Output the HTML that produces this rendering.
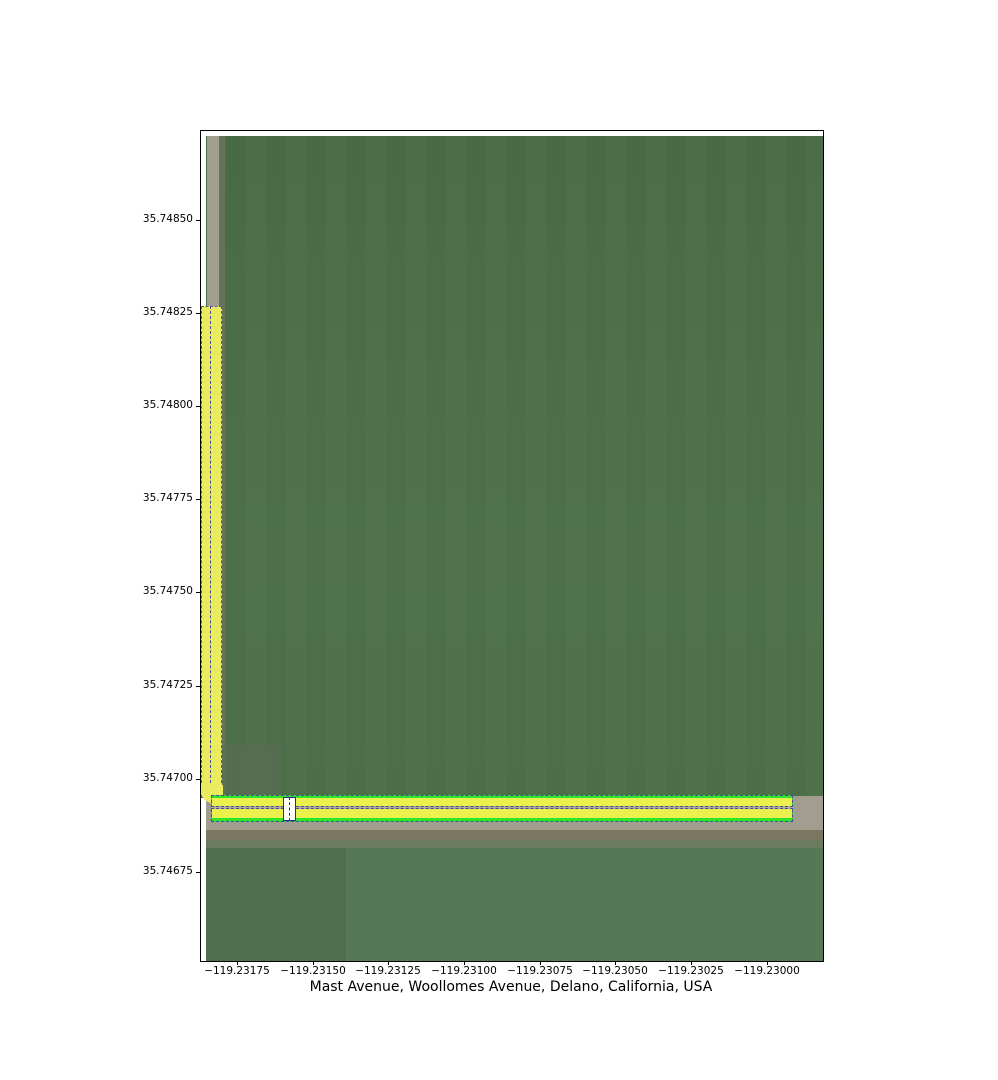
<!DOCTYPE html>
<html><head><meta charset="utf-8"><style>
body{margin:0;background:#fff;width:998px;height:1080px;position:relative;overflow:hidden;font-family:"DejaVu Sans","Liberation Sans",sans-serif;}
.a{position:absolute}
.xt{position:absolute;top:961px;width:1px;height:4px;background:#000}
.xl{position:absolute;top:965px;font-size:10.5px;width:90px;margin-left:-45px;text-align:center;color:#000}
.yt{position:absolute;left:196px;width:4px;height:1px;background:#000}
.yl{position:absolute;left:100px;width:93px;text-align:right;font-size:10.5px;color:#000;margin-top:-7px}
</style></head><body>
<div class="a" style="left:206px;top:136px;width:617px;height:825px;background:#4b6e47;
background-image:repeating-linear-gradient(90deg,rgba(255,255,255,0.012) 0 20px,rgba(0,0,0,0.012) 20px 40px),linear-gradient(180deg,#496b45,#4e714a 50%,#4b6e47);"></div>
<div class="a" style="left:207px;top:136px;width:12px;height:670px;background:#a19f8e"></div>
<div class="a" style="left:219px;top:136px;width:6px;height:670px;background:#67725a"></div>
<div class="a" style="left:222px;top:745px;width:60px;height:50px;background:#5d6c55;opacity:.6"></div>
<div class="a" style="left:206px;top:796px;width:617px;height:36px;background:#a19e90"></div>
<div class="a" style="left:206px;top:830px;width:617px;height:10px;background:#7a7660"></div>
<div class="a" style="left:206px;top:840px;width:617px;height:8px;background:#6a7b5e"></div>
<div class="a" style="left:206px;top:848px;width:617px;height:113px;background:#557955"></div>
<div class="a" style="left:206px;top:848px;width:140px;height:113px;background:#4f6f4f"></div>
<div class="a" style="left:201px;top:306px;width:21px;height:492px;background:#eaec5e;border:1px dashed #5a5aa0;box-sizing:border-box"></div>
<div class="a" style="left:210px;top:306px;width:0;height:492px;border-left:1px dashed #4b4b9a"></div>
<div class="a" style="left:201px;top:785px;width:22px;height:18px;background:#eaec5e;border-radius:0 0 0 12px"></div>
<div class="a" style="left:211px;top:795px;width:582px;height:27px;background:#2ee52a;border:1px dashed #4b4b9a;box-sizing:border-box"></div>
<div class="a" style="left:212px;top:798px;width:580px;height:20px;background:#ecf04c"></div>
<div class="a" style="left:211px;top:806px;width:582px;height:3px;background:#b0ad95;border-top:1px dashed #4b4b9a;border-bottom:1px dashed #4b4b9a;box-sizing:border-box"></div>
<div class="a" style="left:283px;top:797px;width:13px;height:24px;background:#fff;border:1px solid #2a2a8a;box-sizing:border-box"></div>
<div class="a" style="left:289px;top:797px;width:0;height:24px;border-left:1px dashed #2a2a8a"></div>
<div class="a" style="left:200px;top:130px;width:624px;height:832px;border:1px solid #000;box-sizing:border-box"></div>
<div class="xt" style="left:237px"></div><div class="xl" style="left:237px">−119.23175</div>
<div class="xt" style="left:313px"></div><div class="xl" style="left:313px">−119.23150</div>
<div class="xt" style="left:388px"></div><div class="xl" style="left:388px">−119.23125</div>
<div class="xt" style="left:464px"></div><div class="xl" style="left:464px">−119.23100</div>
<div class="xt" style="left:540px"></div><div class="xl" style="left:540px">−119.23075</div>
<div class="xt" style="left:615px"></div><div class="xl" style="left:615px">−119.23050</div>
<div class="xt" style="left:691px"></div><div class="xl" style="left:691px">−119.23025</div>
<div class="xt" style="left:767px"></div><div class="xl" style="left:767px">−119.23000</div>
<div class="yt" style="top:220px"></div><div class="yl" style="top:220px">35.74850</div>
<div class="yt" style="top:313px"></div><div class="yl" style="top:313px">35.74825</div>
<div class="yt" style="top:406px"></div><div class="yl" style="top:406px">35.74800</div>
<div class="yt" style="top:499px"></div><div class="yl" style="top:499px">35.74775</div>
<div class="yt" style="top:592px"></div><div class="yl" style="top:592px">35.74750</div>
<div class="yt" style="top:686px"></div><div class="yl" style="top:686px">35.74725</div>
<div class="yt" style="top:779px"></div><div class="yl" style="top:779px">35.74700</div>
<div class="yt" style="top:872px"></div><div class="yl" style="top:872px">35.74675</div>
<div class="a" style="left:211px;top:979px;width:600px;text-align:center;font-size:14px;color:#000">Mast Avenue, Woollomes Avenue, Delano, California, USA</div>
</body></html>
